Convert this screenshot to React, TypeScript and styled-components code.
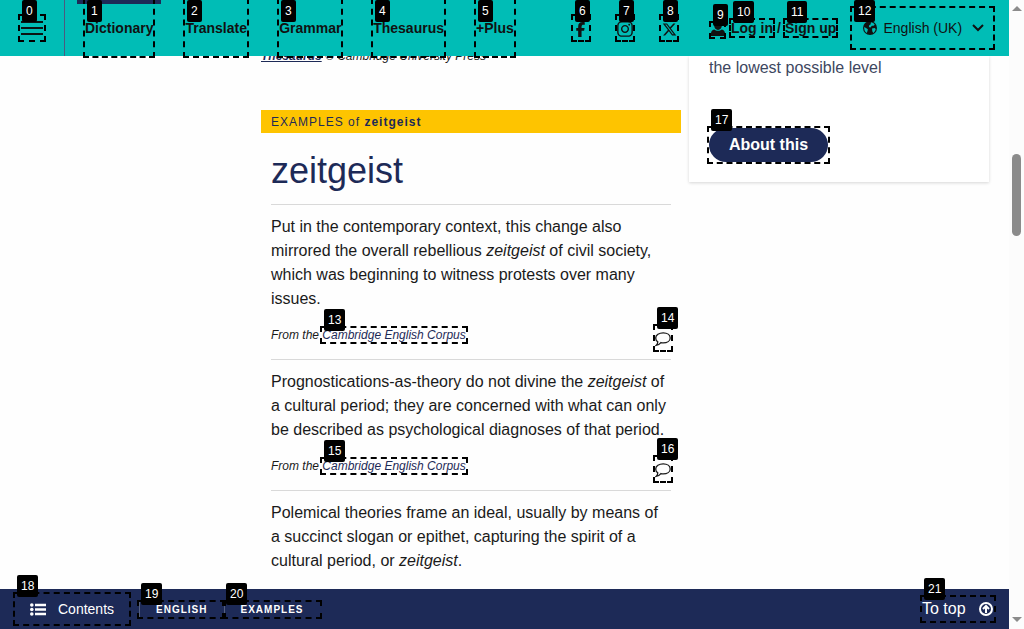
import React from "react";
import styled, { createGlobalStyle } from "styled-components";
import { FaFacebookF, FaInstagram, FaXTwitter } from "react-icons/fa6";

const Global = createGlobalStyle`
  * { box-sizing: border-box; }
  body { margin: 0; overflow: hidden; background: #fefefe; color: #1a1a1a;
    font-family: "Liberation Sans", Arial, sans-serif; font-size: 16px; line-height: 24px; }
  p, h2 { margin: 0; font-weight: 400; }
  svg { display: block; flex: none; }
`;
const Window = styled.div`
  position: relative; display: grid; grid-template-columns: 1009px 15px;
  width: 1024px; height: 629px; overflow: hidden;
`;
const Page = styled.div`
  display: grid; grid-template-rows: 56px 533px 40px; min-width: 0;
`;
const Header = styled.header`
  position: relative; z-index: 2; display: flex; height: 56px; background: #00bdb6; color: #111;
  font-size: 14px; line-height: 56px; white-space: nowrap;
`;
const MenuButton = styled.div`
  width: 65px; border-right: 1px solid #4b5a80; padding: 21px 0 0 21px;
  display: flex; flex-direction: column; gap: 4px;
`;
const MenuLine = styled.span`width: 22px; height: 2px; background: #0b1414;`;
const Nav = styled.nav`display: flex; width: 506px; padding-left: 12px; font-weight: 700;`;
const NavItem = styled.a<{ $w: number; $active?: boolean }>`
  width: ${p => p.$w}px; padding-left: 8px;
  ${p => p.$active && "background: linear-gradient(#1d2a57, #1d2a57) 0 0 / 84px 4px no-repeat;"}
`;
const Social = styled.div`display: flex; align-items: center; gap: 28px; width: 136px; padding: 2px 0 0 2px;`;
const Account = styled.div`display: flex; align-items: center; width: 143px; padding-left: 4px; font-weight: 700;`;
const AccountLink = styled.a<{ $w: number }>`width: ${p => p.$w}px;`;
const Language = styled.div`display: flex; align-items: center; padding-left: 13px;`;
const LanguageName = styled.span`width: 88px; margin-left: 6.5px;`;

const Content = styled.main`
  display: grid; grid-template-columns: 420px 300px; gap: 8px; align-items: start;
  padding-left: 261px;
`;
const Article = styled.article`margin-top: -12px;`;
const Source = styled.p`
  height: 66px; font-size: 12px; line-height: 24px; font-style: italic;
  a { color: #1d2a57; font-weight: 700; text-decoration: underline; }
`;
const Banner = styled.div`
  height: 23px; padding-left: 10px; background: #fec400; color: #1d2a57;
  font-size: 12px; line-height: 24px; letter-spacing: 1px;
`;
const Examples = styled.div`padding: 0 10px;`;
const Headword = styled.h2`height: 71px; padding-top: 15px; color: #1d2a57; font-size: 36px; line-height: 46px;`;
const Example = styled.section`border-top: 1px solid #d9d9d9; padding-top: 10px; white-space: nowrap;`;
const Attribution = styled.div`
  display: flex; justify-content: space-between; height: 48px; padding: 12px 0 0;
  font-size: 12px; font-style: italic; line-height: 25px;
  a { color: #1d2a57; }
`;
const CommentIcon = styled.svg`margin: 9px 0 0;`;
const Card = styled.aside`
  height: 126px; padding: 0 20px; background: #fff; color: #3d4760;
  box-shadow: 0 1px 3px rgba(0,0,0,.16);
`;
const CardText = styled.p`height: 72px;`;
const PillButton = styled.a`
  display: block; width: 119px; height: 34px; border-radius: 17px; background: #1d2a57;
  color: #fff; font-weight: 700; text-align: center; line-height: 34px;
`;

const Footer = styled.footer`
  display: flex; align-items: center; background: #1d2a57; color: #fff;
  font-size: 14px; line-height: 40px; white-space: nowrap;
`;
const Contents = styled.a`display: flex; align-items: center; gap: 12px; width: 139px; padding-left: 30px;`;
const Crumb = styled.a<{ $w: number }>`
  width: ${p => p.$w}px; height: 15px; border-left: 1px solid #55607f; padding-left: 16px;
  font-size: 10px; font-weight: 700; line-height: 15px; letter-spacing: 1px;
`;
const ToTop = styled.a`display: flex; align-items: center; justify-content: space-between; width: 71px; margin: 0 16px 0 auto; font-size: 16px;`;

const Scrollbar = styled.div`
  display: flex; flex-direction: column; align-items: center; justify-content: space-between;
  height: 629px; padding: 6px 0 7px; background: #fcfcfc;
`;
const Thumb = styled.div`width: 9px; height: 82px; margin: 143px 0 auto; border-radius: 5px; background: #8b8b8b;`;

const Mark = styled.div<{ $x: number; $y: number; $w: number; $h: number }>`
  position: absolute; z-index: 5; left: ${p => p.$x}px; top: ${p => p.$y}px;
  width: ${p => p.$w}px; height: ${p => p.$h}px; border: 2px dashed #000;
`;
const Tag = styled.span<{ $x: number; $y: number }>`
  position: absolute; z-index: 6; left: ${p => p.$x}px; top: ${p => p.$y}px;
  height: 22px; padding: 0 4px; border-radius: 2px; background: #000; color: #fff;
  font-size: 12px; line-height: 22px;
`;

const marks = [
  [18, 14, 28, 28], [83, -2, 72, 60], [183, -2, 66, 60], [277, -2, 66, 60], [371, -2, 75, 60],
  [474, -2, 42, 60], [571, 14, 20, 28], [615, 14, 20, 28], [659, 14, 20, 28], [709, 21, 17, 18],
  [729, 18, 46, 20], [783, 18, 55, 20], [850, 6, 145, 44], [320, 326, 148, 18], [653, 324, 20, 28],
  [320, 457, 148, 18], [653, 455, 20, 28], [707, 126, 123, 38], [13, 592, 118, 34],
  [137, 600, 89, 19], [222, 600, 100, 19], [920, 595, 76, 28],
];

const Corpus = () => (
  <Attribution>
    <span>From the <a>Cambridge English Corpus</a></span>
    <CommentIcon width="16" height="15" viewBox="0 0 16 15" fill="none" stroke="#1a1a1a" strokeWidth="1.3">
      <path d="M8.2.9C12.2.9 15.200 3 15.200 5.900s-3 5-7 5c-.9 0-1.600-.1-2.300-.3C4.800 12 3.200 13.100 1.100 13.400c1.100-.9 1.700-2 1.700-3.600C1.300 8.900.7 7.500.7 5.900.7 3 4.100.9 8.200.9z" />
    </CommentIcon>
  </Attribution>
);

const UserIcon = () => (
  <svg width="14" height="16" viewBox="0 0 14 16" fill="#111">
    <ellipse cx="7" cy="5" rx="3.900" ry="5" />
    <path d="M3.200 9.500c2 1.700 5.600 1.700 7.600 0 2.200.6 3.200 2 3.200 4V16H0v-2.500c0-2 1-3.400 3.200-4z" />
  </svg>
);

const GlobeIcon = () => (
  <svg width="14" height="14" viewBox="0 0 14 14">
    <circle cx="7" cy="7" r="7" fill="#111" />
    <path fill="#00bdb6" d="M8 1.200l2.300.8 1.500 1.700-1.300 1-1.600.1-1.500 1.700-1.500-.5.300-1.700 1.300-.9zM1.200 6l1.800 1 1.900 1.300-.4 1.700-.7 2C2 10.900 1 9 1.200 6zM9 7.400l2.600-.3 1.100.9c-.3 1.800-1.100 3-2.500 3.900L9.300 10.200z" />
  </svg>
);

const ListIcon = () => (
  <svg width="16" height="13" viewBox="0 0 16 13" fill="#fff">
    <circle cx="1.800" cy="2" r="1.800" /><circle cx="1.800" cy="6.500" r="1.800" /><circle cx="1.800" cy="11" r="1.800" />
    <path d="M5 .7h11v2.500H5zM5 5.250h11v2.500H5zM5 9.800h11v2.500H5z" />
  </svg>
);

export default function App() {
  return (
    <Window>
      <Global />
      <Page>
        <Header>
          <MenuButton><MenuLine /><MenuLine /><MenuLine /></MenuButton>
          <Nav>
            <NavItem $w={100.5} $active>Dictionary</NavItem>
            <NavItem $w={93.7}>Translate</NavItem>
            <NavItem $w={94}>Grammar</NavItem>
            <NavItem $w={102.8}>Thesaurus</NavItem>
            <NavItem $w={50}>+Plus</NavItem>
          </Nav>
          <Social><FaFacebookF size={15} /><FaInstagram size={18} /><FaXTwitter size={15} /></Social>
          <Account>
            <AccountLink $w={20}><UserIcon /></AccountLink>
            <AccountLink $w={46}>Log in</AccountLink>
            <AccountLink $w={8}>/</AccountLink>
            <AccountLink $w={53}>Sign up</AccountLink>
          </Account>
          <Language>
            <GlobeIcon />
            <LanguageName>English (UK)</LanguageName>
            <svg width="12" height="8" viewBox="0 0 12 8" fill="none" stroke="#111" strokeWidth="2"><path d="M1 1l5 5 5-5" /></svg>
          </Language>
        </Header>
        <Content>
          <Article>
            <Source><a>Thesaurus</a> © Cambridge University Press</Source>
            <Banner>EXAMPLES of <b>zeitgeist</b></Banner>
            <Examples>
              <Headword>zeitgeist</Headword>
              <Example>
                <p>Put in the contemporary context, this change also<br />mirrored the overall rebellious <i>zeitgeist</i> of civil society,<br />which was beginning to witness protests over many<br />issues.</p>
                <Corpus />
              </Example>
              <Example>
                <p>Prognostications-as-theory do not divine the <i>zeitgeist</i> of<br />a cultural period; they are concerned with what can only<br />be described as psychological diagnoses of that period.</p>
                <Corpus />
              </Example>
              <Example>
                <p>Polemical theories frame an ideal, usually by means of<br />a succinct slogan or epithet, capturing the spirit of a<br />cultural period, or <i>zeitgeist</i>.</p>
              </Example>
            </Examples>
          </Article>
          <Card>
            <CardText>the lowest possible level</CardText>
            <PillButton>About this</PillButton>
          </Card>
        </Content>
        <Footer>
          <Contents><ListIcon />Contents</Contents>
          <Crumb $w={84.5}>ENGLISH</Crumb>
          <Crumb $w={98}>EXAMPLES</Crumb>
          <ToTop>
            To top
            <svg width="14" height="14" viewBox="0 0 14 14" fill="none" stroke="#fff" strokeWidth="2"><circle cx="7" cy="7" r="6" /><path d="M7 11V4M4 7l3-3 3 3" /></svg>
          </ToTop>
        </Footer>
      </Page>
      <Scrollbar>
        <svg width="10" height="5" viewBox="0 0 10 5"><path d="M0 5L5 0l5 5z" fill="#8b8b8b" /></svg>
        <Thumb />
        <svg width="10" height="5" viewBox="0 0 10 5"><path d="M0 0l5 5 5-5z" fill="#8b8b8b" /></svg>
      </Scrollbar>
      {marks.map(([x, y, w, h], i) => (
        <React.Fragment key={i}>
          <Mark $x={x} $y={y} $w={w} $h={h} />
          <Tag $x={x + 4} $y={Math.max(0, y - 17)}>{i}</Tag>
        </React.Fragment>
      ))}
    </Window>
  );
}
